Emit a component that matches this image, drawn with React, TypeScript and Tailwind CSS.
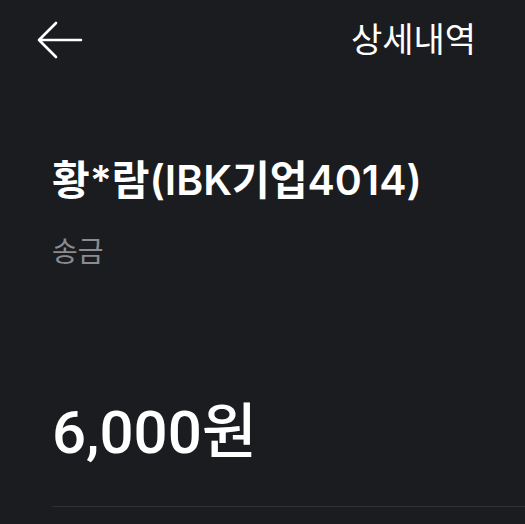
export default function App() {
	return (
		<div
			className="h-[524px] w-[525px] overflow-hidden bg-[#1b1c20] text-white"
			style={{ fontFamily: 'Inter, "Noto Sans CJK KR", sans-serif' }}
		>
			<header className="flex h-[79px] items-center justify-between pl-[37px] pr-[49px]">
				<svg
					width="46"
					height="38"
					viewBox="0 0 46 38"
					fill="none"
					stroke="currentColor"
					strokeWidth="2.6"
					strokeLinecap="round"
					strokeLinejoin="round"
				>
					<path d="M2 19h42M19 2 2 19l17 17" />
				</svg>
				<h1 className="text-[34px] font-normal leading-none">상세내역</h1>
			</header>

			<section className="pl-[52px] pt-[81px]">
				<p className="text-[41px] font-semibold leading-none">
					황*람(IBK기업4014)
				</p>
				<p className="mt-[37px] text-[28px] leading-none text-[#8b8c91]">
					송금
				</p>
			</section>

			<section className="pl-[52px] pt-[137px]">
				<p
					className="text-[60px] font-medium leading-none"
					style={{ fontFamily: 'Roboto, "Noto Sans CJK KR", sans-serif' }}
				>
					6,000원
				</p>
				<div className="mt-[43px] h-px bg-[#2f3035]" />
			</section>
		</div>
	);
}
